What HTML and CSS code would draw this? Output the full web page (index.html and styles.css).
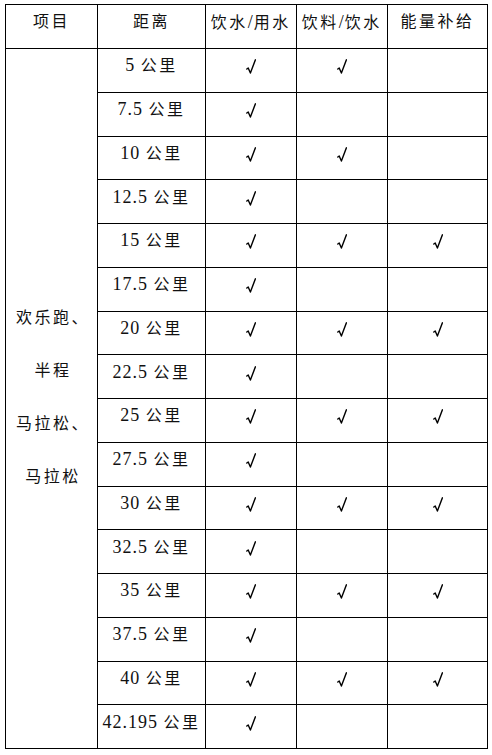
FILE: index.html
```html
<!DOCTYPE html>
<html lang="zh-CN">
<head>
<meta charset="utf-8">
<title>补给站</title>
<link rel="stylesheet" href="styles.css">
</head>
<body>
<svg class="defs" width="0" height="0" aria-hidden="true">
  <symbol id="ck" viewBox="0 0 10 15">
    <path d="M0.8 10 L2.2 9 L4.4 14 L9.4 0.8" fill="none" stroke="#000" stroke-width="1.4" stroke-linejoin="round" stroke-linecap="round"/>
  </symbol>
</svg>
<table class="grid">
  <colgroup>
    <col class="c1"><col class="c2"><col class="c3"><col class="c4"><col class="c5">
  </colgroup>
  <thead>
    <tr class="hd"><th>项目</th><th>距离</th><th>饮水<span class="num">/</span>用水</th><th>饮料<span class="num">/</span>饮水</th><th>能量补给</th></tr>
  </thead>
  <tbody>
    <tr>
      <td rowspan="16" class="proj"><p>欢乐跑、</p><p>半程</p><p>马拉松、</p><p>马拉松</p></td>
      <td><span class="num">5 </span>公里</td><td><svg class="tick"><use href="#ck"/></svg></td><td><svg class="tick"><use href="#ck"/></svg></td><td></td>
    </tr>
    <tr><td><span class="num">7.5 </span>公里</td><td><svg class="tick"><use href="#ck"/></svg></td><td></td><td></td></tr>
    <tr><td><span class="num">10 </span>公里</td><td><svg class="tick"><use href="#ck"/></svg></td><td><svg class="tick"><use href="#ck"/></svg></td><td></td></tr>
    <tr><td><span class="num">12.5 </span>公里</td><td><svg class="tick"><use href="#ck"/></svg></td><td></td><td></td></tr>
    <tr><td><span class="num">15 </span>公里</td><td><svg class="tick"><use href="#ck"/></svg></td><td><svg class="tick"><use href="#ck"/></svg></td><td><svg class="tick"><use href="#ck"/></svg></td></tr>
    <tr><td><span class="num">17.5 </span>公里</td><td><svg class="tick"><use href="#ck"/></svg></td><td></td><td></td></tr>
    <tr><td><span class="num">20 </span>公里</td><td><svg class="tick"><use href="#ck"/></svg></td><td><svg class="tick"><use href="#ck"/></svg></td><td><svg class="tick"><use href="#ck"/></svg></td></tr>
    <tr><td><span class="num">22.5 </span>公里</td><td><svg class="tick"><use href="#ck"/></svg></td><td></td><td></td></tr>
    <tr><td><span class="num">25 </span>公里</td><td><svg class="tick"><use href="#ck"/></svg></td><td><svg class="tick"><use href="#ck"/></svg></td><td><svg class="tick"><use href="#ck"/></svg></td></tr>
    <tr><td><span class="num">27.5 </span>公里</td><td><svg class="tick"><use href="#ck"/></svg></td><td></td><td></td></tr>
    <tr><td><span class="num">30 </span>公里</td><td><svg class="tick"><use href="#ck"/></svg></td><td><svg class="tick"><use href="#ck"/></svg></td><td><svg class="tick"><use href="#ck"/></svg></td></tr>
    <tr><td><span class="num">32.5 </span>公里</td><td><svg class="tick"><use href="#ck"/></svg></td><td></td><td></td></tr>
    <tr><td><span class="num">35 </span>公里</td><td><svg class="tick"><use href="#ck"/></svg></td><td><svg class="tick"><use href="#ck"/></svg></td><td><svg class="tick"><use href="#ck"/></svg></td></tr>
    <tr><td><span class="num">37.5 </span>公里</td><td><svg class="tick"><use href="#ck"/></svg></td><td></td><td></td></tr>
    <tr><td><span class="num">40 </span>公里</td><td><svg class="tick"><use href="#ck"/></svg></td><td><svg class="tick"><use href="#ck"/></svg></td><td><svg class="tick"><use href="#ck"/></svg></td></tr>
    <tr><td><span class="num">42.195 </span>公里</td><td><svg class="tick"><use href="#ck"/></svg></td><td></td><td></td></tr>
  </tbody>
</table>
</body>
</html>
```
FILE: styles.css
```css
html, body {
  margin: 0;
  padding: 0;
  background: #fff;
}
body {
  padding: 4px 0 0 5px;
  font-family: "Liberation Serif", "Noto Sans CJK SC", serif;
  font-size: 16px;
  color: #111;
}
.defs {
  position: absolute;
  width: 0;
  height: 0;
}
.grid {
  border-collapse: collapse;
  table-layout: fixed;
  width: 482px;
}
.c1 { width: 92px; }
.c2 { width: 108px; }
.c3 { width: 90.5px; }
.c4 { width: 91.5px; }
.c5 { width: 100px; }
.grid th,
.grid td {
  border: 1px solid #000;
  padding: 0 1px 9px;
  height: 43.75px;
  box-sizing: border-box;
  text-align: center;
  vertical-align: middle;
  font-weight: normal;
  letter-spacing: 2.5px;
  white-space: nowrap;
  line-height: 20px;
}
.grid .hd th {
  height: 44px;
}
.num {
  font-size: 18px;
  letter-spacing: 1px;
}
.grid td.proj {
  padding: 0 0 4px 3px;
}
.proj p {
  margin: 0;
  line-height: 53px;
}
.tick {
  display: block;
  margin: 2px auto 0;
  width: 10px;
  height: 15px;
}
```
